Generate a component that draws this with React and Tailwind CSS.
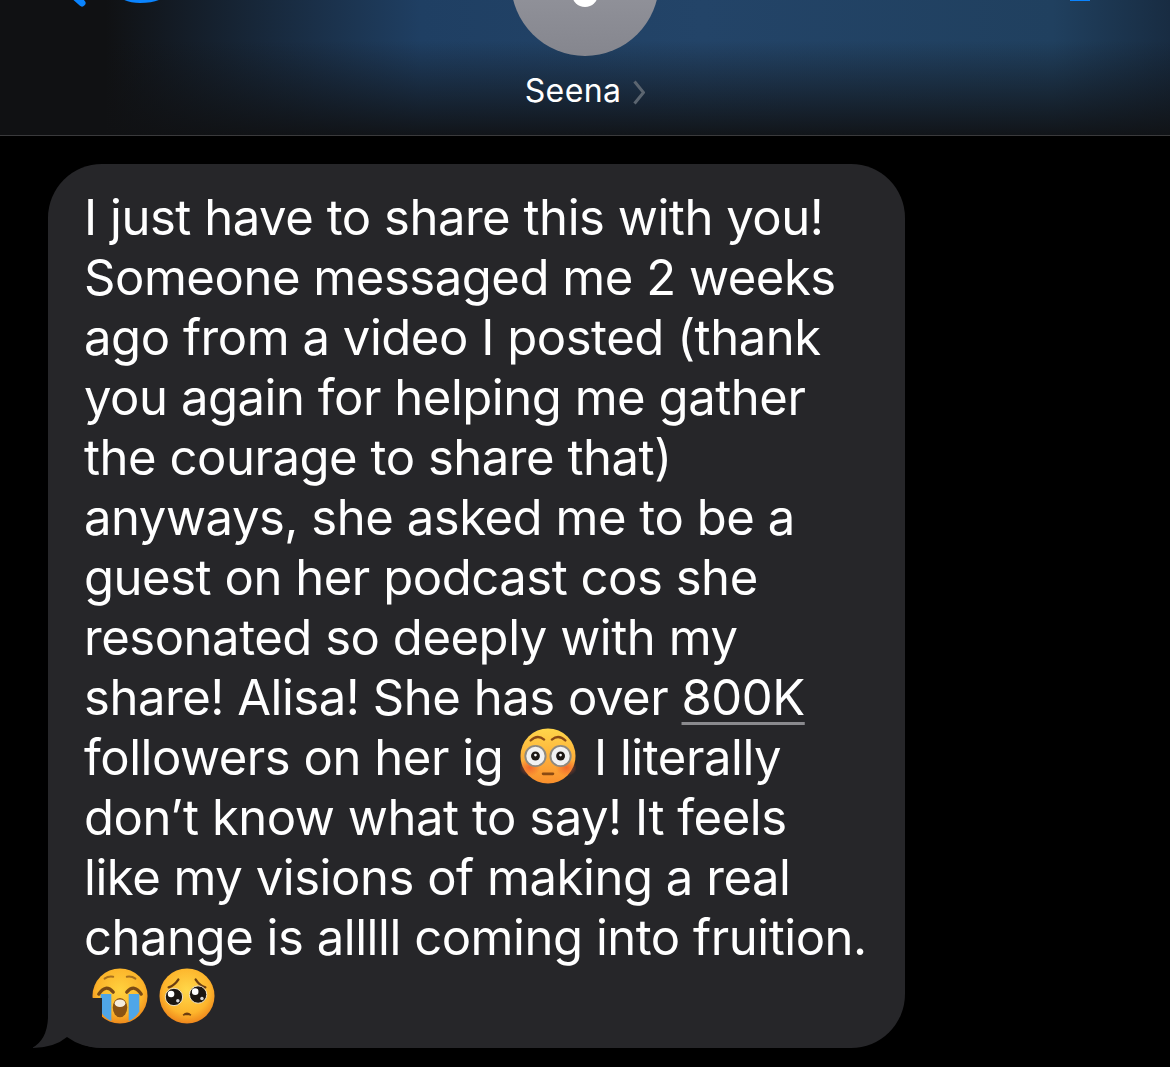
const LINES = [
  'I just have to share this with you!',
  'Someone messaged me 2 weeks',
  'ago from a video I posted (thank',
  'you again for helping me gather',
  'the courage to share that)',
  'anyways, she asked me to be a',
  'guest on her podcast cos she',
  'resonated so deeply with my',
]

function FlushedEmoji() {
  return (
    <svg width="56" height="56" viewBox="0 0 58 58" className="inline-block align-[-9px]">
      <defs>
        <linearGradient id="flush" x1="0" y1="0" x2="0" y2="1">
          <stop offset="0%" stopColor="#ffd64a" />
          <stop offset="50%" stopColor="#fdb23c" />
          <stop offset="100%" stopColor="#f98f2c" />
        </linearGradient>
        <radialGradient id="cheek" cx="50%" cy="50%" r="50%">
          <stop offset="0%" stopColor="#f0552a" stopOpacity="0.75" />
          <stop offset="100%" stopColor="#f0552a" stopOpacity="0" />
        </radialGradient>
      </defs>
      <circle cx="29" cy="29" r="28.5" fill="url(#flush)" />
      <ellipse cx="10" cy="41" rx="11" ry="9" fill="url(#cheek)" />
      <ellipse cx="48" cy="41" rx="11" ry="9" fill="url(#cheek)" />
      <path d="M11 13 Q18 6 25 12" fill="none" stroke="#8a4a16" strokeWidth="2.4" strokeLinecap="round" />
      <path d="M33 12 Q40 6 47 13" fill="none" stroke="#8a4a16" strokeWidth="2.4" strokeLinecap="round" />
      <circle cx="16" cy="29" r="10.5" fill="#f2f2f2" stroke="#8f8a80" strokeWidth="2" />
      <circle cx="42" cy="29" r="10.5" fill="#f2f2f2" stroke="#8f8a80" strokeWidth="2" />
      <circle cx="16" cy="29" r="4.6" fill="#1f1a16" />
      <circle cx="42" cy="29" r="4.6" fill="#1f1a16" />
      <circle cx="16" cy="28" r="1.4" fill="#fff" />
      <circle cx="42" cy="28" r="1.4" fill="#fff" />
      <rect x="22.5" y="46" width="13" height="3" rx="1.5" fill="#8a4a12" />
    </svg>
  )
}

function CryingEmoji() {
  return (
    <svg width="56" height="56" viewBox="0 0 58 58">
      <defs>
        <radialGradient id="cry" cx="50%" cy="40%" r="60%">
          <stop offset="0%" stopColor="#ffd23f" />
          <stop offset="70%" stopColor="#fcb42a" />
          <stop offset="100%" stopColor="#ee8a1c" />
        </radialGradient>
      </defs>
      <circle cx="29" cy="29" r="28.5" fill="url(#cry)" />
      <path d="M9 27 L20 27 L20 55 Q13 52 9 45 Z" fill="#4fa6e8" />
      <path d="M38 27 L49 27 L49 45 Q45 52 38 55 Z" fill="#4fa6e8" />
      <path d="M7 27 Q14 16 22 25" fill="none" stroke="#7a4a14" strokeWidth="3.4" strokeLinecap="round" />
      <path d="M36 25 Q44 16 51 27" fill="none" stroke="#7a4a14" strokeWidth="3.4" strokeLinecap="round" />
      <path d="M13 11 Q17 8 22 9" fill="none" stroke="#a8701e" strokeWidth="2" strokeLinecap="round" />
      <path d="M45 11 Q41 8 36 9" fill="none" stroke="#a8701e" strokeWidth="2" strokeLinecap="round" />
      <ellipse cx="29" cy="41" rx="7.5" ry="10" fill="#8a5314" />
      <ellipse cx="29" cy="36.5" rx="5.5" ry="4" fill="#f5ecdc" />
    </svg>
  )
}

function PleadingEmoji() {
  return (
    <svg width="56" height="56" viewBox="0 0 58 58">
      <defs>
        <radialGradient id="plead" cx="50%" cy="40%" r="60%">
          <stop offset="0%" stopColor="#ffd84a" />
          <stop offset="70%" stopColor="#fdb52c" />
          <stop offset="100%" stopColor="#ee861c" />
        </radialGradient>
      </defs>
      <circle cx="29" cy="29" r="28.5" fill="url(#plead)" />
      <path d="M10 20 Q16 18 20 12" fill="none" stroke="#6b3d10" strokeWidth="2.4" strokeLinecap="round" />
      <path d="M48 20 Q42 18 38 12" fill="none" stroke="#6b3d10" strokeWidth="2.4" strokeLinecap="round" />
      <circle cx="15.5" cy="30" r="9" fill="#1c1712" stroke="#f6e7c8" strokeWidth="1" />
      <circle cx="40.5" cy="27.5" r="9" fill="#1c1712" stroke="#f6e7c8" strokeWidth="1" />
      <circle cx="12.5" cy="27" r="3.4" fill="#fff" />
      <circle cx="37.5" cy="24.5" r="3.4" fill="#fff" />
      <circle cx="19.5" cy="34" r="1.8" fill="#d9d9d9" />
      <circle cx="44.5" cy="31.5" r="1.8" fill="#d9d9d9" />
      <path d="M25 49 Q29 45 33 49" fill="#6b3d10" stroke="#6b3d10" strokeWidth="1.6" strokeLinejoin="round" />
    </svg>
  )
}

function Header() {
  return (
    <div className="relative h-[136px] overflow-hidden border-b border-[#3a3a3c] bg-[#101113]">
      <div className="absolute inset-0 bg-[linear-gradient(to_bottom,rgba(16,17,19,0)_0%,rgba(16,17,19,0)_30%,rgba(16,17,19,0.92)_100%),linear-gradient(to_right,#101113_0%,#101113_9%,#1f3f63_36%,#234468_60%,#20405f_90%,#182c42_100%)]" />
      <svg width="170" height="8" viewBox="0 0 170 8" className="absolute left-0 top-0">
        <path d="M72 -6 L82 3" stroke="#0a84ff" strokeWidth="7" strokeLinecap="round" fill="none" />
        <path d="M118 -4 Q126 3 140 3 Q158 3 165 -4 Z" fill="#0a84ff" />
      </svg>
      <div className="absolute right-[80px] top-0 h-px w-[20px] bg-[#0a84ff]" />
      <div className="relative flex flex-col items-center">
        <div className="mt-[-92px] flex h-[148px] w-[148px] items-end justify-center overflow-hidden rounded-full bg-gradient-to-b from-[#a0a1a9] to-[#85868e]">
          <div className="mb-[49px] h-[26px] w-[26px] rounded-full bg-white" />
        </div>
        <div className="mt-[17px] flex items-center gap-[12px] font-['Inter',sans-serif] text-[32px] leading-[36px] tracking-[0.4px] text-white">
          <span>Seena</span>
          <svg width="12" height="25" viewBox="0 0 12 25" className="mt-[3px]">
            <path d="M1.5 1.5 L10.5 12.5 L1.5 23.5" fill="none" stroke="#5b6570" strokeWidth="3" />
          </svg>
        </div>
      </div>
    </div>
  )
}

export default function App() {
  return (
    <div className="h-[1067px] w-[1170px] overflow-hidden bg-black font-['Inter',sans-serif]">
      <Header />
      <div className="relative ml-[48px] mt-[28px] w-[857px] rounded-[54px] bg-[#262629] pb-[20px] pl-[36px] pt-[24px] text-[49px] leading-[60px] tracking-[-0.46px] text-white">
        {LINES.map((line) => (
          <div key={line} className="whitespace-nowrap">{line}</div>
        ))}
        <div className="h-[60px] whitespace-nowrap">
          share! Alisa! She has over{' '}
          <span className="underline decoration-[#8a8a8e] decoration-[3px] underline-offset-[7px]">800K</span>
        </div>
        <div className="h-[60px] whitespace-nowrap">
          followers on her ig <span className="ml-[3px] mr-[5px]"><FlushedEmoji /></span> I literally
        </div>
        <div className="whitespace-nowrap">don’t know what to say! It feels</div>
        <div className="whitespace-nowrap">like my visions of making a real</div>
        <div className="whitespace-nowrap">change is alllll coming into fruition.</div>
        <div className="flex h-[60px] items-start gap-[11px] pl-[8px]">
          <CryingEmoji />
          <PleadingEmoji />
        </div>
        {/* tail */}
        <svg width="72" height="50" viewBox="0 0 72 50" className="absolute bottom-0 left-[-16px]">
          <path d="M16 0 L16 20 Q15 42 0 50 Q22 50 35 39 Q50 50 70 50 L70 0 Z" fill="#262629" />
        </svg>
      </div>
    </div>
  )
}
